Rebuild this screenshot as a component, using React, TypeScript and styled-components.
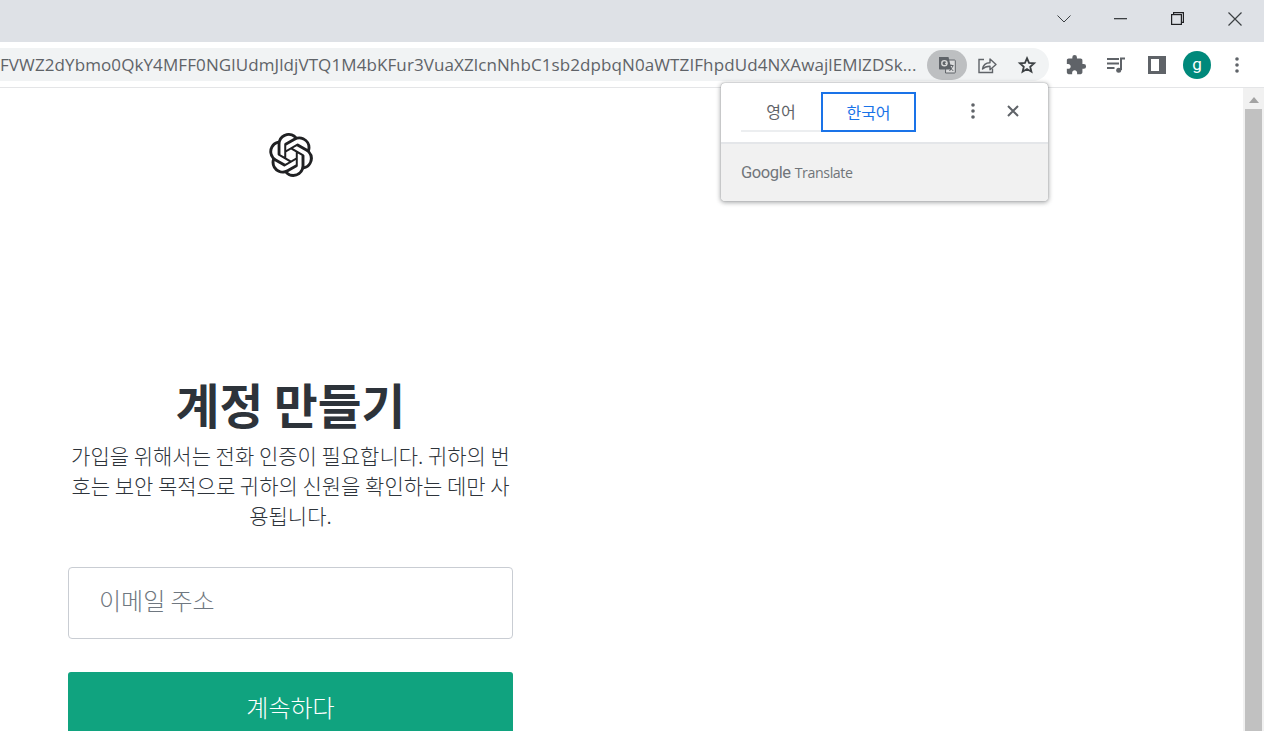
import styled, { createGlobalStyle } from 'styled-components';
import { SiOpenai } from 'react-icons/si';
import { MdExtension } from 'react-icons/md';

const GlobalStyle = createGlobalStyle`
  html, body {
    margin: 0;
    height: 100%;
    overflow: hidden;
    background: #fff;
    font-family: "Noto Sans CJK KR", "Noto Sans", sans-serif;
  }
`;

const Window = styled.div`
  position: relative;
  display: flex;
  flex-direction: column;
  width: 1264px;
  height: 731px;
  overflow: hidden;
`;

const TitleBar = styled.div`
  display: flex;
  justify-content: flex-end;
  height: 42px;
  padding-right: 1px;
  box-sizing: border-box;
  background: #dee1e6;
  flex: none;
`;

const WindowButton = styled.div`
  display: flex;
  align-items: center;
  justify-content: center;
  width: 57px;
  height: 37px;
  color: #3c4043;
`;

const Toolbar = styled.div`
  display: flex;
  align-items: center;
  height: 46px;
  flex: none;
  background: #fff;
  border-bottom: 1px solid #e4e5e7;
  box-sizing: border-box;
`;

const Omnibox = styled.div`
  display: flex;
  align-items: center;
  width: 1049px;
  height: 33px;
  padding-right: 2px;
  box-sizing: border-box;
  background: #f1f3f4;
  border-radius: 0 17px 17px 0;
  flex: none;
`;

const Url = styled.div`
  width: 927px;
  padding-bottom: 1px;
  font-family: "Open Sans", sans-serif;
  font-size: 17px;
  letter-spacing: 0.1px;
  color: #5f6368;
  white-space: nowrap;
  overflow: hidden;
  flex: none;
`;

const TranslateChip = styled.div`
  display: flex;
  align-items: center;
  justify-content: center;
  width: 40px;
  height: 30px;
  border-radius: 15px;
  background: #bdbfc1;
  flex: none;
`;

const OmniAction = styled.div`
  display: flex;
  align-items: center;
  justify-content: center;
  width: 40px;
  height: 30px;
  flex: none;
`;

const ToolIcons = styled.div`
  display: flex;
  align-items: center;
  margin-left: 7px;
`;

const ToolButton = styled.div<{ $shift?: number }>`
  display: flex;
  align-items: center;
  justify-content: center;
  width: 40px;
  height: 32px;
  margin-left: ${(p) => p.$shift ?? 0}px;
  color: #5f6368;
`;

const Avatar = styled.div`
  display: flex;
  align-items: center;
  justify-content: center;
  width: 28px;
  height: 28px;
  margin: 0 6px;
  border-radius: 50%;
  background: #00897b;
  color: #fff;
  font-family: "Roboto", sans-serif;
  font-size: 17px;
  padding-bottom: 2px;
  box-sizing: border-box;
`;

const Page = styled.div`
  display: flex;
  flex: 1;
  min-height: 0;
`;

const Content = styled.main`
  flex: 1;
  padding: 45px 0 0 68px;
`;

const Column = styled.div`
  display: flex;
  flex-direction: column;
  align-items: center;
  width: 445px;
`;

const Logo = styled.div`
  display: flex;
  color: #202123;
  margin-bottom: 197px;
`;

const Title = styled.h1`
  margin: 0;
  font-size: 47.500px;
  line-height: 60px;
  font-weight: 700;
  color: #2d333a;
`;

const Intro = styled.p`
  margin: 6px 0 0;
  width: 445px;
  font-size: 21px;
  line-height: 30px;
  font-weight: 300;
  text-align: center;
  color: #2d333a;
`;

const EmailField = styled.div`
  display: flex;
  align-items: center;
  width: 100%;
  height: 72px;
  margin-top: 37px;
  padding: 0 0 7px 30px;
  box-sizing: border-box;
  border: 1px solid #c9cdd3;
  border-radius: 4px;
  font-size: 24px;
  font-weight: 300;
  color: #6f7780;
`;

const SubmitButton = styled.div`
  display: flex;
  align-items: center;
  justify-content: center;
  width: 100%;
  height: 72px;
  margin-top: 33px;
  border-radius: 3px;
  background: #10a37f;
  color: #fff;
  font-size: 24px;
  font-weight: 300;
  padding-bottom: 3px;
  box-sizing: border-box;
`;

const Scrollbar = styled.div`
  display: flex;
  flex-direction: column;
  align-items: center;
  width: 21px;
  padding: 0 2px;
  box-sizing: border-box;
  background: #f1f1f1;
  flex: none;
`;

const ScrollArrow = styled.div`
  width: 0;
  height: 0;
  margin: 9px 0 6px;
  border-left: 5px solid transparent;
  border-right: 5px solid transparent;
  border-bottom: 6px solid #a3a3a3;
`;

const ScrollThumb = styled.div`
  width: 100%;
  flex: 1;
  background: #c1c1c1;
`;

const Popover = styled.div`
  position: absolute;
  top: 83px;
  left: 721px;
  width: 327px;
  height: 118px;
  display: flex;
  flex-direction: column;
  border-radius: 4px;
  overflow: hidden;
  background: #fff;
  box-shadow: 0 0 1px rgba(60, 64, 67, 0.6), 0 1px 4px 1px rgba(60, 64, 67, 0.4);
`;

const PopoverTop = styled.div`
  display: flex;
  align-items: flex-start;
  height: 61px;
  padding: 9px 0 0 20px;
  box-sizing: border-box;
  border-bottom: 2px solid #e4e6e9;
  flex: none;
`;

const LanguageTab = styled.div<{ $active?: boolean }>`
  display: flex;
  align-items: center;
  justify-content: center;
  height: 40px;
  box-sizing: border-box;
  width: ${(p) => (p.$active ? '95px' : '80px')};
  font-size: 16px;
  color: ${(p) => (p.$active ? '#1a73e8' : '#5f6368')};
  border: ${(p) => (p.$active ? '2px solid #1a73e8' : '0')};
  border-bottom: 2px solid ${(p) => (p.$active ? '#1a73e8' : '#eceef0')};
`;

const PopoverAction = styled.div<{ $gap: number }>`
  display: flex;
  align-items: center;
  justify-content: center;
  width: 24px;
  height: 38px;
  margin-left: ${(p) => p.$gap}px;
  color: #5f6368;
`;

const PopoverFooter = styled.div`
  display: flex;
  align-items: center;
  gap: 4px;
  flex: 1;
  padding: 0 0 0 20px;
  background: #f1f1f1;
  color: #70757a;
  font-family: "Open Sans", sans-serif;
`;

const GoogleWord = styled.span`
  font-family: "Roboto", sans-serif;
  font-size: 16.500px;
  font-weight: 400;
  letter-spacing: -0.4px;
`;

const TranslateWord = styled.span`
  font-size: 14.200px;
  letter-spacing: -0.4px;
`;

function TranslateIcon() {
  return (
    <svg width="20" height="20" viewBox="0 0 20 20">
      <path d="M9 5h8.500a.8.8 0 0 1 .8.8v11.400a.8.8 0 0 1-.8.8H8.500z" fill="#dadbdc" stroke="#5f6368" strokeWidth="1" />
      <path d="M2 2h9.500l3 12.500H2.800a.8.8 0 0 1-.8-.8z" fill="#5f6368" />
      <circle cx="7.400" cy="8.200" r="2.600" fill="none" stroke="#d8d8d8" strokeWidth="1.400" />
      <path d="M8 8.300h2.400" stroke="#d8d8d8" strokeWidth="1.200" />
      <path d="M11.500 10.500h5M14 9.500v1M12.500 16l3.500-5M12.800 12.300l3.500 3.700" fill="none" stroke="#5f6368" strokeWidth="1" />
    </svg>
  );
}

function ShareIcon() {
  return (
    <svg width="20" height="20" viewBox="0 0 20 20" fill="none" stroke="#5f6368" strokeWidth="1.400">
      <path d="M7 4.500H2v13h13.500v-4" />
      <path d="M5.500 14c.7-4.200 3.600-6.300 7.500-6.300V4l6 5.500-6 5.200v-3.500c-3 0-5.600.7-7.500 2.800z" strokeLinejoin="round" />
    </svg>
  );
}

function StarIcon() {
  return (
    <svg width="20" height="20" viewBox="0 0 20 20" fill="none" stroke="#3c4043" strokeWidth="1.800">
      <path d="M10 3.200l2 4.700 5.100.4-3.900 3.400 1.200 5-4.400-2.700-4.400 2.700 1.200-5-3.900-3.400 5.100-.4z" strokeLinejoin="miter" />
    </svg>
  );
}

function QueueMusicIcon() {
  return (
    <svg width="20" height="20" viewBox="0 0 20 20" fill="none" stroke="#5f6368" strokeWidth="2">
      <path d="M1 4h12M1 8.500h12M1 13h7.500" />
      <path d="M15 15V3.500h4" />
      <circle cx="12.700" cy="15.300" r="2.500" fill="#5f6368" stroke="none" />
    </svg>
  );
}

function SidePanelIcon() {
  return (
    <svg width="18" height="18" viewBox="0 0 18 18">
      <path fillRule="evenodd" d="M0 0h18v18H0zM3 3v12h8V3z" fill="#5f6368" />
    </svg>
  );
}

function DotsIcon({ color }: { color: string }) {
  return (
    <svg width="4" height="16" viewBox="0 0 4 16" fill={color}>
      <circle cx="2" cy="2" r="1.800" />
      <circle cx="2" cy="8" r="1.800" />
      <circle cx="2" cy="14" r="1.800" />
    </svg>
  );
}

export default function App() {
  return (
    <Window>
      <GlobalStyle />
      <TitleBar>
        <WindowButton>
          <svg width="14" height="8" viewBox="0 0 14 8" fill="none" stroke="#3c4043">
            <path d="M.5.500 7 7 13.500.500" />
          </svg>
        </WindowButton>
        <WindowButton>
          <svg width="13" height="2" viewBox="0 0 13 2">
            <rect width="13" height="1.300" fill="#3c4043" />
          </svg>
        </WindowButton>
        <WindowButton>
          <svg width="13" height="13" viewBox="0 0 13 13" fill="none" stroke="#202124" strokeWidth="1.200">
            <rect x=".6" y="2.600" width="9.800" height="9.800" />
            <path d="M2.600 2.600V.6h9.800v9.800h-2" />
          </svg>
        </WindowButton>
        <WindowButton>
          <svg width="14" height="14" viewBox="0 0 14 14" fill="none" stroke="#3c4043" strokeWidth="1.200">
            <path d="M.5.500l13 13M13.500.500l-13 13" />
          </svg>
        </WindowButton>
      </TitleBar>
      <Toolbar>
        <Omnibox>
          <Url>FVWZ2dYbmo0QkY4MFF0NGlUdmJldjVTQ1M4bKFur3VuaXZlcnNhbC1sb2dpbqN0aWTZIFhpdUd4NXAwajlEMlZDSk...</Url>
          <TranslateChip>
            <TranslateIcon />
          </TranslateChip>
          <OmniAction>
            <ShareIcon />
          </OmniAction>
          <OmniAction>
            <StarIcon />
          </OmniAction>
        </Omnibox>
        <ToolIcons>
          <ToolButton>
            <MdExtension size={22} />
          </ToolButton>
          <ToolButton>
            <QueueMusicIcon />
          </ToolButton>
          <ToolButton $shift={1}>
            <SidePanelIcon />
          </ToolButton>
          <Avatar>g</Avatar>
          <ToolButton>
            <DotsIcon color="#5f6368" />
          </ToolButton>
        </ToolIcons>
      </Toolbar>
      <Page>
        <Content>
          <Column>
            <Logo>
              <SiOpenai size={44} />
            </Logo>
            <Title>계정 만들기</Title>
            <Intro>가입을 위해서는 전화 인증이 필요합니다. 귀하의 번호는 보안 목적으로 귀하의 신원을 확인하는 데만 사용됩니다.</Intro>
            <EmailField>이메일 주소</EmailField>
            <SubmitButton>계속하다</SubmitButton>
          </Column>
        </Content>
        <Scrollbar>
          <ScrollArrow />
          <ScrollThumb />
        </Scrollbar>
      </Page>
      <Popover>
        <PopoverTop>
          <LanguageTab>영어</LanguageTab>
          <LanguageTab $active>한국어</LanguageTab>
          <PopoverAction $gap={45}>
            <DotsIcon color="#5f6368" />
          </PopoverAction>
          <PopoverAction $gap={16}>
            <svg width="12" height="12" viewBox="0 0 12 12" fill="none" stroke="#5f6368" strokeWidth="2">
              <path d="M1 1l10 10M11 1 1 11" />
            </svg>
          </PopoverAction>
        </PopoverTop>
        <PopoverFooter>
          <GoogleWord>Google</GoogleWord>
          <TranslateWord>Translate</TranslateWord>
        </PopoverFooter>
      </Popover>
    </Window>
  );
}
